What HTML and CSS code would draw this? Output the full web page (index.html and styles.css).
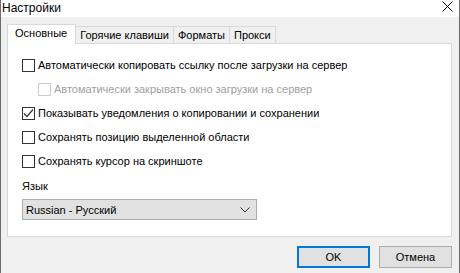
FILE: index.html
```html
<!DOCTYPE html>
<html lang="ru">

<head>
    <meta charset="UTF-8">
    <title>Настройки</title>
    <link rel="stylesheet" href="styles.css">
</head>

<body>
    <div class="window">
        <!-- Title bar -->
        <div class="titlebar">
            <span class="title">Настройки</span>
            <svg class="close" width="11" height="11" viewBox="0 0 11 11">
                <path d="M0.5 0.5 L10.5 10.5 M10.5 0.5 L0.5 10.5" stroke="#000" stroke-width="1" fill="none"/>
            </svg>
        </div>

        <div class="content">
            <div class="tabs">
                <div class="tab active">Основные</div>
                <div class="tab">Горячие клавиши</div>
                <div class="tab">Форматы</div>
                <div class="tab">Прокси</div>
            </div>

            <div class="panel">
                <label class="row">
                    <span class="box"></span>
                    Автоматически копировать ссылку после загрузки на сервер
                </label>
                <label class="row sub disabled">
                    <span class="box"></span>
                    Автоматически закрывать окно загрузки на сервер
                </label>
                <label class="row">
                    <span class="box">
                        <svg width="11" height="11" viewBox="0 0 11 11">
                            <path d="M1 5.5 L4 8.5 L10 1.5" stroke="#333" stroke-width="1.2" fill="none"/>
                        </svg>
                    </span>
                    Показывать уведомления о копировании и сохранении
                </label>
                <label class="row">
                    <span class="box"></span>
                    Сохранять позицию выделенной области
                </label>
                <label class="row">
                    <span class="box"></span>
                    Сохранять курсор на скриншоте
                </label>

                <div class="lang-label">Язык</div>
                <div class="select">
                    <span>Russian - Русский</span>
                    <svg width="10" height="6" viewBox="0 0 10 6">
                        <path d="M0.5 0.5 L5 5 L9.5 0.5" stroke="#333" stroke-width="1" fill="none"/>
                    </svg>
                </div>
            </div>

            <div class="buttons">
                <div class="btn default">OK</div>
                <div class="btn">Отмена</div>
            </div>
        </div>
    </div>
</body>

</html>
```

FILE: styles.css
```css
body {
    margin: 0;
    padding: 0;
    font-family: "Liberation Sans", Arial, sans-serif;
    font-size: 11px;
    color: #000;
    background: #f0f0f0;
}

.window {
    width: 460px;
    height: 273px;
    box-sizing: border-box;
    border-left: 1px solid #6d6d6d;
    border-right: 1px solid #6d6d6d;
    display: flex;
    flex-direction: column;
    background: #f0f0f0;
    overflow: hidden;
}

/* Title bar */
.titlebar {
    height: 17px;
    background: #fff;
    display: flex;
    align-items: center;
    justify-content: space-between;
    padding: 0 6px 0 1px;
}

.title {
    font-size: 12px;
    line-height: 14px;
    margin-top: -2px;
}

.close {
    margin-top: -5px;
}

.content {
    padding: 7px 7px 0 6px;
}

/* Tabs */
.tabs {
    display: flex;
    align-items: flex-end;
    height: 19px;
    position: relative;
    z-index: 1;
}

.tab {
    height: 16px;
    line-height: 16px;
    padding: 0 4px;
    background: #f0f0f0;
    border: 1px solid #d9d9d9;
    border-bottom: none;
    border-left: none;
}

.tab.active {
    height: 19px;
    line-height: 17px;
    background: #fff;
    border-left: 1px solid #d9d9d9;
    padding: 0 8px 0 7px;
    margin-bottom: -1px;
}

.panel {
    height: 194px;
    box-sizing: border-box;
    background: #fff;
    border: 1px solid #d9d9d9;
    padding: 9px 14px 0;
}

.row {
    display: flex;
    align-items: center;
    height: 24px;
    gap: 3px;
    white-space: nowrap;
}

.row.sub {
    padding-left: 16px;
}

.row.disabled {
    color: #a0a0a0;
}

.box {
    width: 11px;
    height: 11px;
    border: 1px solid #333;
    background: #fff;
    display: flex;
    align-items: center;
    justify-content: center;
}

.row.disabled .box {
    border-color: #ccc;
}

.lang-label {
    margin-top: 5px;
    line-height: 16px;
}

.select {
    margin-top: 5px;
    width: 235px;
    height: 21px;
    box-sizing: border-box;
    background: #e1e1e1;
    border: 1px solid #adadad;
    display: flex;
    align-items: center;
    justify-content: space-between;
    padding: 0 6px 0 3px;
}

/* Buttons */
.buttons {
    display: flex;
    justify-content: flex-end;
    gap: 9px;
    margin-top: 9px;
}

.btn {
    width: 73px;
    height: 22px;
    box-sizing: border-box;
    background: #e1e1e1;
    border: 1px solid #adadad;
    text-align: center;
    line-height: 20px;
}

.btn.default {
    border: 2px solid #0078d7;
    line-height: 18px;
}
```
